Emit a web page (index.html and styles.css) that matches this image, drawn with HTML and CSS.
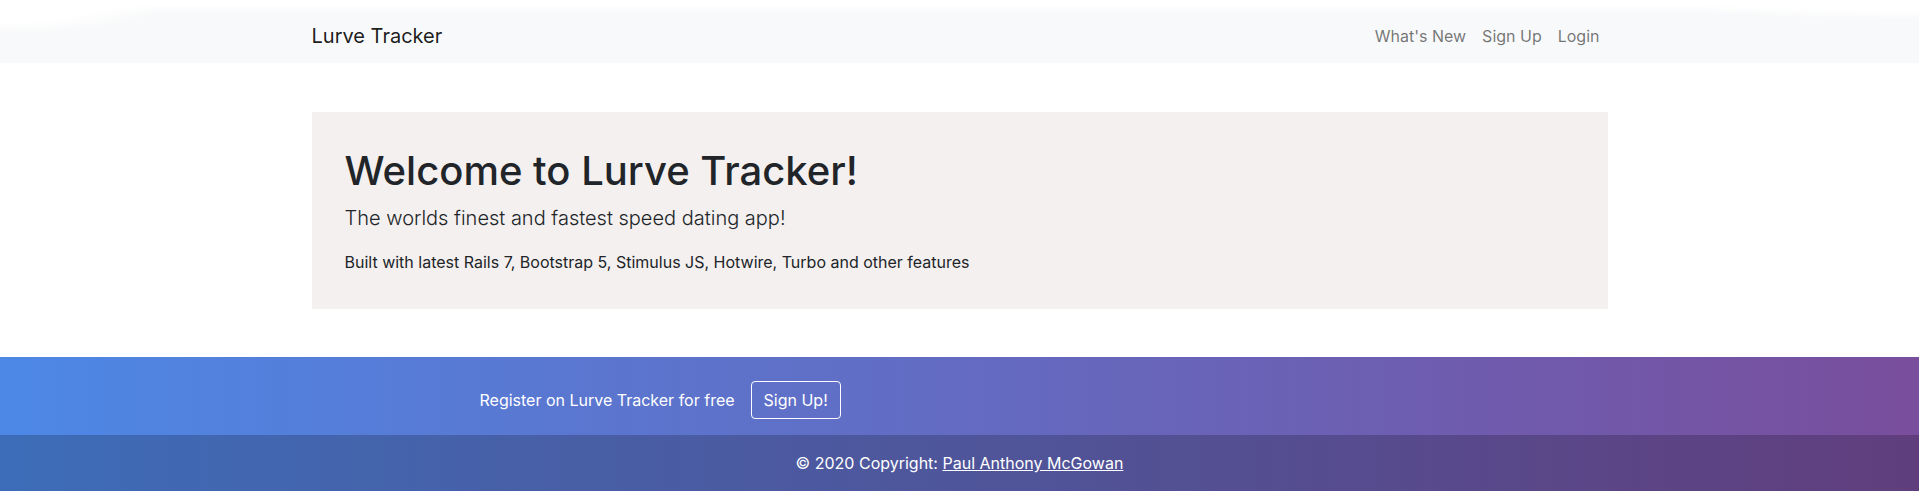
FILE: index.html
```html
<!DOCTYPE html>
<html lang="en">
<head>
<meta charset="utf-8">
<title>Lurve Tracker</title>
<link rel="stylesheet" href="styles.css">
</head>
<body>
<nav class="navbar">
  <div class="container nav-inner">
    <a class="brand" href="#">Lurve Tracker</a>
    <ul class="nav-links">
      <li><a href="#">What's New</a></li>
      <li><a href="#">Sign Up</a></li>
      <li><a href="#">Login</a></li>
    </ul>
  </div>
</nav>
<main class="container main">
  <div class="jumbotron">
    <h1 class="title">Welcome to Lurve Tracker!</h1>
    <p class="lead">The worlds finest and fastest speed dating app!</p>
    <p class="built">Built with latest Rails 7, Bootstrap 5, Stimulus JS, Hotwire, Turbo and other features</p>
  </div>
</main>
<footer class="footer">
  <section class="register">
    <div class="container register-inner">
      <span class="register-text">Register on Lurve Tracker for free</span>
      <a class="btn-outline" href="#">Sign Up!</a>
    </div>
  </section>
  <div class="copyright">© 2020 Copyright: <a href="#">Paul Anthony McGowan</a></div>
</footer>
</body>
</html>
```

FILE: styles.css
```css
* { box-sizing: border-box; }
html, body { margin: 0; padding: 0; }
body {
  font-family: Inter, "Noto Sans", sans-serif;
  font-size: 16px;
  line-height: 1.5;
  color: #212529;
  background: #fff;
}
a { text-decoration: none; }
.container {
  max-width: 1320px;
  margin: 0 auto;
  padding: 0 12px;
}
.navbar {
  height: 63px;
  padding: 16px 0 7px;
  background:
    radial-gradient(ellipse 170px 34px at 0 0, #fff 65%, rgba(255,255,255,0) 100%),
    radial-gradient(ellipse 260px 20px at 100% 0, #fff 55%, rgba(255,255,255,0) 100%),
    linear-gradient(to bottom, #fff 0, #fff 5px, rgba(255,255,255,0) 14px),
    #f8f9fa;
}
.nav-inner {
  display: flex;
  align-items: center;
  justify-content: space-between;
}
.brand {
  font-size: 20px;
  line-height: 30px;
  padding: 5px 0;
  color: rgba(0,0,0,.9);
}
.nav-links {
  list-style: none;
  display: flex;
  margin: 0;
  padding: 0;
}
.nav-links a {
  display: block;
  padding: 8px;
  color: rgba(0,0,0,.55);
}
.main { margin-top: 49px; margin-bottom: 48px; }
.jumbotron {
  background: #f4f0ef;
  padding: 35px 33px;
}
.title {
  font-size: 40px;
  font-weight: 500;
  line-height: 1.2;
  margin: 0 0 8px;
}
.lead {
  font-size: 20px;
  font-weight: 300;
  margin: 0 0 17px;
}
.built { margin: 0; }
.footer {
  color: #fff;
  background: linear-gradient(to right, #4d88e6, #794e9d);
}
.register {
  padding: 24px 0 16px;
}
.register-inner {
  display: flex;
  align-items: baseline;
  gap: 16px;
  padding-left: 180px;
}
.btn-outline {
  color: #fff;
  border: 1px solid #fff;
  border-radius: 4px;
  padding: 6px 12px;
  line-height: 24px;
}
.copyright {
  background: rgba(0,0,0,.2);
  text-align: center;
  padding: 16px;
}
.copyright a {
  color: #fff;
  text-decoration: underline;
}
```
